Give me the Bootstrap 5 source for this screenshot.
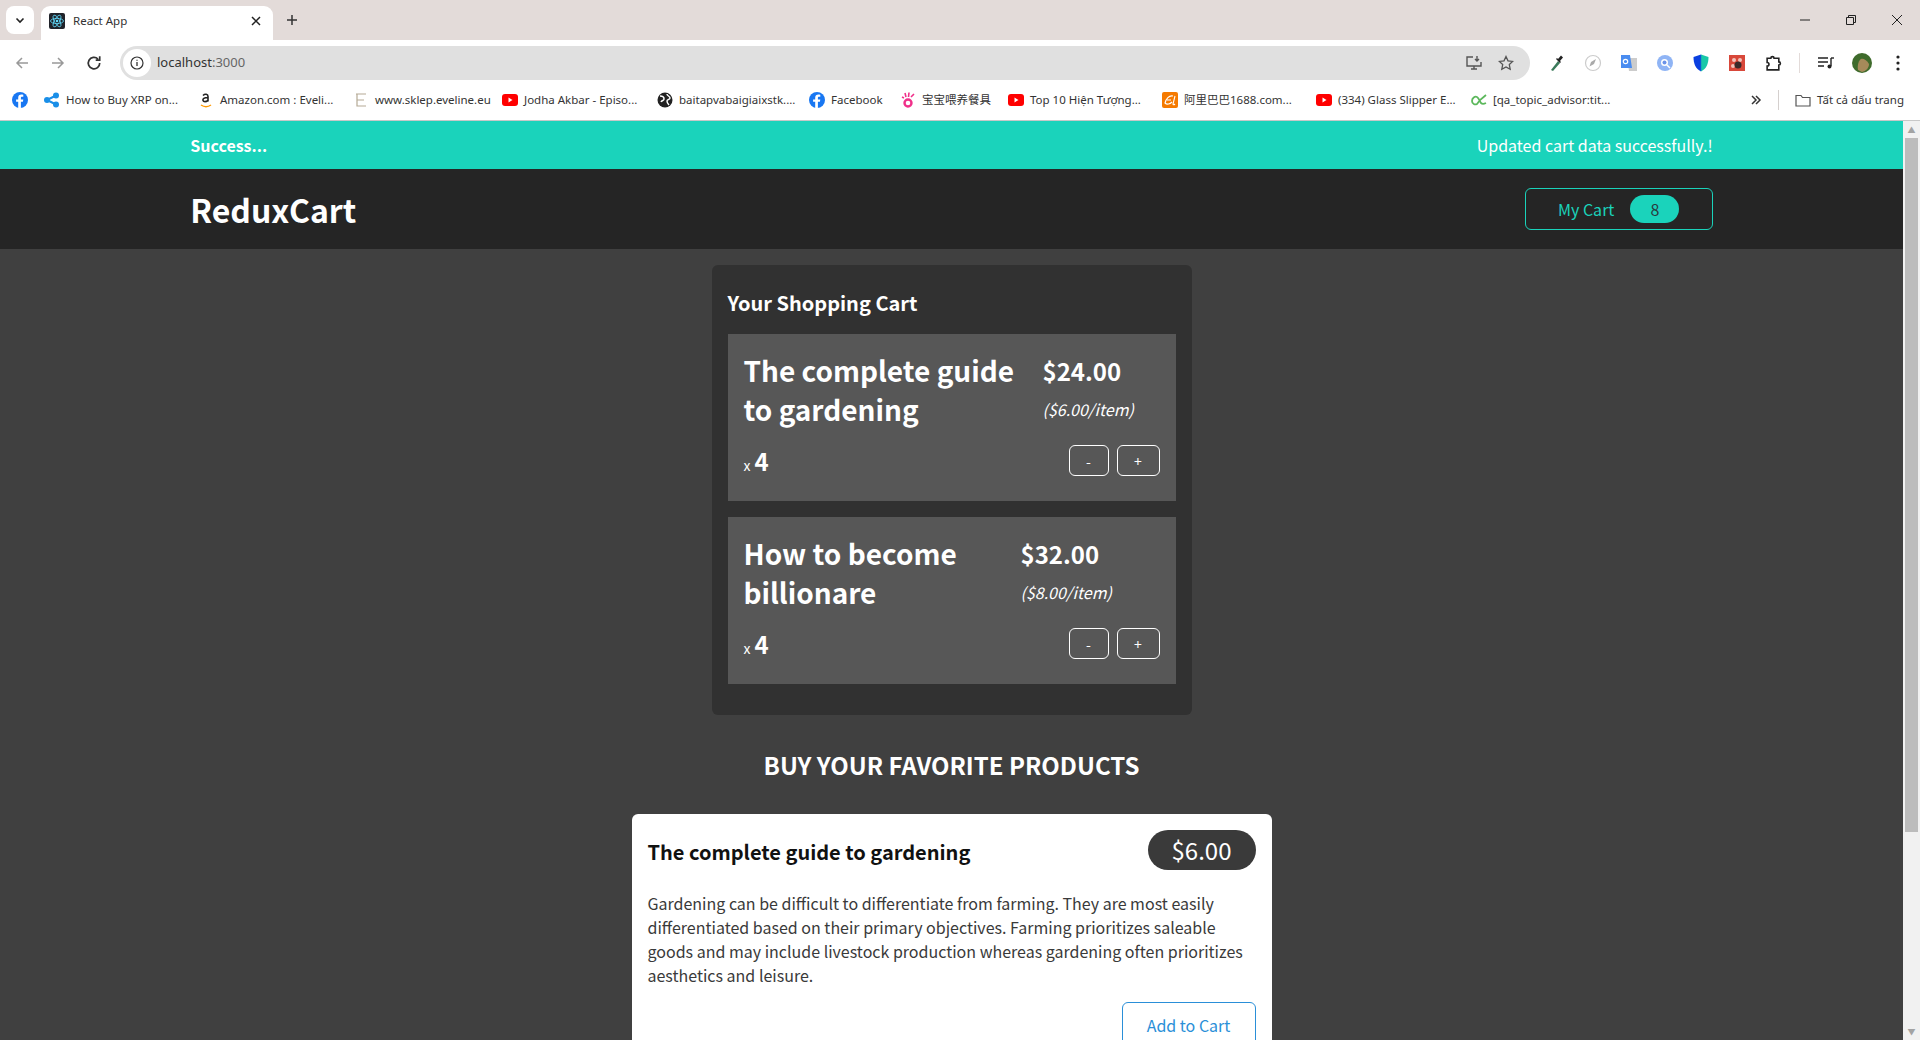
<!DOCTYPE html>
<html lang="en">
<head>
<meta charset="UTF-8">
<title>React App</title>
<link href="https://cdn.jsdelivr.net/npm/bootstrap@5.3.0/dist/css/bootstrap.min.css" rel="stylesheet">
<style>
    html, body { height: 100%; overflow: hidden; }
    body { background: #404040; font-family: "Noto Sans CJK SC", "Noto Sans", sans-serif; }
    .ui-font { font-family: "Noto Sans", "Noto Sans CJK SC", sans-serif; }

    /* browser chrome */
    .tabstrip { height: 40px; background: #e3dbd9; }
    .tab-list-btn { width: 28px; height: 28px; margin: 6px 0 0 6px; background: #fff; border-radius: 8px; }
    .tab-item { width: 232px; height: 34px; margin: 6px 0 0 7px; padding: 0 12px 5px 8px; background: #fff; border-radius: 9px 9px 0 0; font-size: 11.5px; color: #333; }
    .tab-item svg { flex: none; }
    .tab-add { width: 28px; height: 28px; margin: 6px 0 0 5px; }
    .win-btn { width: 46px; height: 40px; }
    .toolbar { height: 46px; background: #fff; padding: 6px 0 6px 4px; }
    .tool-btn { width: 36px; flex: none; }
    .tool-btn svg { display: block; margin: 0 auto; }
    .addressbar { width: 1410px; height: 34px; margin-left: 8px; margin-right: 9px; padding: 0 16px 0 3px; border-radius: 17px; background: #e0e0e0; font-size: 13px; color: #333; }
    .addr-icon { width: 28px; height: 28px; border-radius: 50%; background: #fff; margin-right: 6px; }
    .addr-dim { color: #666; }
    .tool-sep { width: 1px; height: 20px; background: #e3dbd9; margin: 0 8px; flex: none; }
    .bookmarks { height: 35px; background: #fff; border-bottom: 1px solid #c8c8c8; font-size: 11.5px; color: #333; padding: 0 0 6px 12px; display: grid; grid-template-columns: 32px 154px 155px 149px 155px 152px 91px 108px 154px 154px 155px 279px 45px 125px; align-items: center; }
    .bm-item { display: flex; align-items: center; gap: 6px; white-space: nowrap; overflow: hidden; }
    .bm-item svg { flex: none; }
    .bm-over { display: flex; align-items: center; justify-content: space-between; }
    .bm-sep { width: 1px; height: 20px; background: #d5d0ce; margin-right: 16px; }

    /* page */
    .viewport { flex: 1 1 0; min-height: 0; }
    .page-pane { flex: 1 1 0; overflow: hidden; color: #fff; }
    .fake-scroll { width: 17px; background: #f1f1f1; padding: 0 2px; flex: none; }
    .scroll-arrow { height: 17px; color: #a3a3a3; font-size: 8px; line-height: 17px; text-align: center; }
    .scroll-thumb { height: 694px; background: #bcbcbc; }
    .wrap-80 { width: 80%; margin: 0 auto; }
    .notify-bar { height: 48px; background: #1ad3bb; font-size: 16px; }
    .notify-title { font-weight: 700; }
    .top-nav { height: 80px; background: #252525; }
    .brand-name { font-size: 32px; font-weight: 700; line-height: 1; margin: 0; }
    .cart-btn { width: 188px; height: 42px; border: 1px solid #1ad3bb; border-radius: 6px; color: #1ad3bb; font-size: 16px; background: transparent; padding: 0; }
    .cart-count { width: 49px; height: 28px; margin-left: 16px; border-radius: 14px; background: #1ad3bb; color: #2a3a40; line-height: 28px; }
    .cart-panel { width: 480px; margin: 16px auto 0; padding: 15px 16px 31px 16px; background: #313131; border-radius: 6px; }
    .cart-heading { font-size: 20px; font-weight: 700; line-height: 46px; margin: 0 0 8px; }
    .cart-entry { height: 167px; margin: 0 0 16px; padding: 16px 16px 25px; background: #575757; }
    .cart-entry:last-child { margin-bottom: 0; }
    .entry-title { font-size: 28px; font-weight: 700; line-height: 39px; margin: 1px 0 0; flex: none; }
    .title-wide { width: 299px; }
    .title-narrow { width: 277px; }
    .entry-price { font-size: 24px; font-weight: 700; line-height: 39px; margin-top: 1px; }
    .entry-unit { font-size: 16px; font-style: italic; line-height: 39px; font-weight: 400; }
    .entry-qty { font-size: 14px; line-height: 1; }
    .entry-qty b { font-size: 24px; margin-left: 4px; }
    .step-btn { height: 31px; border: 1px solid #fff; border-radius: 6px; background: transparent; color: #fff; font-size: 14px; line-height: 1; padding: 0; }
    .step-minus { width: 40px; }
    .step-plus { width: 43px; }
    .section-title { font-size: 24px; font-weight: 700; text-align: center; line-height: 36px; margin: 32px 0 31px; }
    .shop-card { width: 640px; margin: 0 auto; padding: 16px; background: #fff; border-radius: 6px; color: #3a3a3a; }
    .shop-title { font-size: 20px; font-weight: 700; color: #111; line-height: 40px; margin: 2px 0 0; }
    .shop-price { width: 108px; height: 40px; border-radius: 20px; background: #3a3a3a; color: #fff; font-size: 24px; line-height: 40px; text-align: center; }
    .shop-text { font-size: 16px; line-height: 24px; margin: 19px 0 15px; }
    .shop-btn { width: 134px; height: 46px; border: 1px solid #2a8fd8; border-radius: 6px; background: #fff; color: #2a8fd8; font-size: 16px; padding: 0; }
</style>
</head>
<body class="d-flex flex-column">

<div class="tabstrip d-flex flex-none">
    <div class="tab-list-btn d-flex align-items-center justify-content-center">
        <svg width="10" height="10" viewBox="0 0 10 10"><path d="M1.500 3.500 5 7l3.500-3.500" fill="none" stroke="#222" stroke-width="1.600"/></svg>
    </div>
    <div class="tab-item ui-font d-flex align-items-center">
        <svg width="16" height="16" viewBox="0 0 16 16"><rect width="16" height="16" rx="2" fill="#20232a"/><g fill="none" stroke="#61dafb" stroke-width=".8"><ellipse cx="8" cy="8" rx="6.500" ry="2.600"/><ellipse cx="8" cy="8" rx="6.500" ry="2.600" transform="rotate(60 8 8)"/><ellipse cx="8" cy="8" rx="6.500" ry="2.600" transform="rotate(120 8 8)"/></g><circle cx="8" cy="8" r="1.300" fill="#61dafb"/></svg>
        <span class="ms-2 flex-grow-1">React App</span>
        <svg width="10" height="10" viewBox="0 0 10 10"><path d="M1 1l8 8M9 1 1 9" stroke="#222" stroke-width="1.500"/></svg>
    </div>
    <div class="tab-add d-flex align-items-center justify-content-center">
        <svg width="12" height="12" viewBox="0 0 12 12"><path d="M6 1v10M1 6h10" stroke="#333" stroke-width="1.500"/></svg>
    </div>
    <div class="ms-auto d-flex">
        <div class="win-btn d-flex align-items-center justify-content-center"><svg width="10" height="10" viewBox="0 0 10 10"><path d="M0 5h10" stroke="#222"/></svg></div>
        <div class="win-btn d-flex align-items-center justify-content-center"><svg width="10" height="10" viewBox="0 0 10 10"><path d="M.5 2.500h7v7h-7zM2.500 2.500v-2h7v7h-2" fill="none" stroke="#222"/></svg></div>
        <div class="win-btn d-flex align-items-center justify-content-center"><svg width="10" height="10" viewBox="0 0 10 10"><path d="M0 0l10 10M10 0 0 10" stroke="#222"/></svg></div>
    </div>
</div>

<div class="toolbar d-flex align-items-center ui-font">
    <div class="tool-btn"><svg width="14" height="14" viewBox="0 0 14 14"><path d="M13 7H2M7 2 2 7l5 5" fill="none" stroke="#999" stroke-width="1.500"/></svg></div>
    <div class="tool-btn"><svg width="14" height="14" viewBox="0 0 14 14"><path d="M1 7h11M7 2l5 5-5 5" fill="none" stroke="#999" stroke-width="1.500"/></svg></div>
    <div class="tool-btn"><svg width="16" height="16" viewBox="0 0 14 14"><path d="M12 7a5 5 0 1 1-1.500-3.500M12 1v3.500H8.500" fill="none" stroke="#333" stroke-width="1.500"/></svg></div>
    <div class="addressbar d-flex align-items-center">
        <div class="addr-icon d-flex align-items-center justify-content-center"><svg width="14" height="14" viewBox="0 0 14 14"><circle cx="7" cy="7" r="6" fill="none" stroke="#333" stroke-width="1.200"/><path d="M7 6v4M7 3.800v1" stroke="#333" stroke-width="1.300"/></svg></div>
        <span>localhost<span class="addr-dim">:3000</span></span>
        <div class="ms-auto d-flex align-items-center gap-3">
            <svg width="16" height="16" viewBox="0 0 16 16"><path d="M7 2H1v9h14V7M5 14h6M8 11v3M11 1v5M9 4l2 2 2-2" fill="none" stroke="#555" stroke-width="1.400"/></svg>
            <svg width="16" height="16" viewBox="0 0 16 16"><path d="m8 1.500 2 4.300 4.700.6-3.400 3.200.9 4.700L8 11.900l-4.200 2.400.9-4.700L1.300 6.400 6 5.800z" fill="none" stroke="#555" stroke-width="1.300"/></svg>
        </div>
    </div>
    <div class="tool-btn"><svg width="16" height="18" viewBox="0 0 16 18"><path d="M2 16 9 7l2 2-7 8z" fill="#3a7a5a"/><path d="M9 5l3-3.500 2 2L11 7l1 1-1 1-4-4 1-1z" fill="#222"/></svg></div>
    <div class="tool-btn"><svg width="18" height="18" viewBox="0 0 18 18"><circle cx="9" cy="9" r="7.500" fill="#fff" stroke="#ccc" stroke-width="1.200"/><path d="M5.500 12.500 7 8l5-3-2 5z" fill="#aaa"/></svg></div>
    <div class="tool-btn"><svg width="18" height="18" viewBox="0 0 18 18"><path d="M7 4h10v13H9z" fill="#ccc"/><path d="M1 1h9l2 13H1z" fill="#4a8cf0"/><circle cx="5.500" cy="7.500" r="2.200" fill="none" stroke="#fff" stroke-width="1.200"/></svg></div>
    <div class="tool-btn"><svg width="18" height="18" viewBox="0 0 18 18"><circle cx="9" cy="9" r="8" fill="#8fb4f5"/><circle cx="8.500" cy="8.500" r="3.500" fill="#fff"/><circle cx="8.500" cy="8.500" r="2" fill="#6a92e8"/><path d="m11 11 3 3" stroke="#fff" stroke-width="1.500"/></svg></div>
    <div class="tool-btn"><svg width="16" height="18" viewBox="0 0 16 18"><defs><linearGradient id="sh" x1="0" x2="1"><stop offset=".45" stop-color="#0a3fe0"/><stop offset=".55" stop-color="#18c8a8"/></linearGradient></defs><path d="M8 .5 15.500 3c0 7-2 11.500-7.500 14.500C2.500 14.500.5 10 .5 3z" fill="url(#sh)"/></svg></div>
    <div class="tool-btn"><svg width="16" height="16" viewBox="0 0 16 16"><rect width="16" height="16" fill="#d8483a"/><circle cx="5" cy="5" r="2" fill="#f3c4bc"/><circle cx="11" cy="5" r="2" fill="#f3c4bc"/><circle cx="4" cy="11" r="2" fill="#f3c4bc"/><circle cx="9" cy="10" r="3.500" fill="#3a2a2a"/></svg></div>
    <div class="tool-btn"><svg width="17" height="17" viewBox="0 0 16 16"><path d="M2 3h3.500a1.500 1.500 0 0 1 3 0H13v3.500a1.500 1.500 0 0 1 0 3V14H2v-3.500a1.500 1.500 0 0 0 0-3.500z" fill="none" stroke="#222" stroke-width="1.500"/></svg></div>
    <div class="tool-sep"></div>
    <div class="tool-btn"><svg width="16" height="14" viewBox="0 0 16 14"><path d="M0 2h10M0 6h10M0 10h6" stroke="#222" stroke-width="1.400"/><path d="M13 2v8" stroke="#222" stroke-width="1.400"/><circle cx="11.500" cy="10.500" r="2" fill="#222"/><path d="M13 2h3" stroke="#222" stroke-width="1.400"/></svg></div>
    <div class="tool-btn"><svg width="20" height="20" viewBox="0 0 20 20"><circle cx="10" cy="10" r="10" fill="#3f6b2c"/><path d="M6 17c-1-5 1-10 3-11s6 1 8 5c0 4-3 7-7 8z" fill="#a58a5a"/></svg></div>
    <div class="tool-btn"><svg width="4" height="16" viewBox="0 0 4 16"><circle cx="2" cy="2" r="1.600" fill="#222"/><circle cx="2" cy="8" r="1.600" fill="#222"/><circle cx="2" cy="14" r="1.600" fill="#222"/></svg></div>
</div>

<div class="bookmarks ui-font">
    <div class="bm-item"><svg width="16" height="16" viewBox="0 0 16 16"><circle cx="8" cy="8" r="8" fill="#1877f2"/><path d="M8.900 16V9.800h2l.4-2.400H8.900V6c0-.7.3-1.200 1.300-1.200h1.100V2.700c-.5-.1-1.200-.2-1.900-.2-2 0-3.200 1.200-3.200 3.200v1.700H4.100v2.400h2.100V16z" fill="#fff"/></svg></div>
    <div class="bm-item"><svg width="16" height="16" viewBox="0 0 16 16"><circle cx="3" cy="8" r="3" fill="#1a8fe8"/><circle cx="12" cy="3.500" r="3" fill="#1a8fe8"/><circle cx="12" cy="12.500" r="3" fill="#1a8fe8"/><path d="m3 8 9-4.500M3 8l9 4.500" stroke="#1a8fe8" stroke-width="2"/></svg><span>How to Buy XRP on...</span></div>
    <div class="bm-item"><svg width="16" height="16" viewBox="0 0 16 16"><path d="M3 13c3 2 7 2 10 0" fill="none" stroke="#f90" stroke-width="1.500"/><path d="M5 3.500c2-2 5-1.500 5 1v5M10 5.500C6 5.500 4.500 7 5 8.500s3 1.500 5 0" fill="none" stroke="#222" stroke-width="1.600"/></svg><span>Amazon.com : Eveli...</span></div>
    <div class="bm-item"><svg width="16" height="16" viewBox="0 0 16 16"><path d="M3 2h10M4 2v12h9M4 8h7" fill="none" stroke="#b5aa95" stroke-width="1.200"/></svg><span>www.sklep.eveline.eu</span></div>
    <div class="bm-item"><svg width="16" height="16" viewBox="0 0 16 16"><rect y="2" width="16" height="12" rx="3" fill="#f00"/><path d="m6.500 5.500 4 2.500-4 2.500z" fill="#fff"/></svg><span>Jodha Akbar - Episo...</span></div>
    <div class="bm-item"><svg width="16" height="16" viewBox="0 0 16 16"><circle cx="8" cy="8" r="7.500" fill="#222"/><path d="M3 4c2 0 4 1 4 3s-2 1-3 3M10 2c0 2 3 2 3 4s-3 1-3 3 1 3 2 4" fill="none" stroke="#fff" stroke-width="1.500"/></svg><span>baitapvabaigiaixstk....</span></div>
    <div class="bm-item"><svg width="16" height="16" viewBox="0 0 16 16"><circle cx="8" cy="8" r="8" fill="#1877f2"/><path d="M8.900 16V9.800h2l.4-2.400H8.900V6c0-.7.3-1.200 1.300-1.200h1.100V2.700c-.5-.1-1.200-.2-1.900-.2-2 0-3.200 1.200-3.200 3.200v1.700H4.100v2.400h2.100V16z" fill="#fff"/></svg><span>Facebook</span></div>
    <div class="bm-item"><svg width="16" height="16" viewBox="0 0 16 16"><circle cx="8" cy="11" r="3.500" fill="none" stroke="#f0308a" stroke-width="2.400"/><path d="M5 1l1 4M9 0.500 8.500 5M14 2l-3 3M2 5l2 1" stroke="#f0308a" stroke-width="1.600"/></svg><span>宝宝喂养餐具</span></div>
    <div class="bm-item"><svg width="16" height="16" viewBox="0 0 16 16"><rect y="2" width="16" height="12" rx="3" fill="#f00"/><path d="m6.500 5.500 4 2.500-4 2.500z" fill="#fff"/></svg><span>Top 10 Hiện Tượng...</span></div>
    <div class="bm-item"><svg width="16" height="16" viewBox="0 0 16 16"><rect width="16" height="16" rx="2" fill="#f57a00"/><path d="M11 4C7 3 4 7 3 11c2 2 5 1 7-1M5 8h4M13 4l-2 8c0 1 1 1 2 0" fill="none" stroke="#fff" stroke-width="1.100"/></svg><span>阿里巴巴1688.com...</span></div>
    <div class="bm-item"><svg width="16" height="16" viewBox="0 0 16 16"><rect y="2" width="16" height="12" rx="3" fill="#f00"/><path d="m6.500 5.500 4 2.500-4 2.500z" fill="#fff"/></svg><span>(334) Glass Slipper E...</span></div>
    <div class="bm-item"><svg width="16" height="16" viewBox="0 0 16 16"><path d="M15 3 9 8l-3 4c-2 1-5 0-5-3s3-5 5-4 3 5 4 6 3 1 5 0" fill="none" stroke="#5cb85c" stroke-width="1.800"/></svg><span>[qa_topic_advisor:tit...</span></div>
    <div class="bm-over"><svg width="12" height="12" viewBox="0 0 12 12"><path d="m2 2 4 4-4 4M6 2l4 4-4 4" fill="none" stroke="#333" stroke-width="1.500"/></svg><div class="bm-sep"></div></div>
    <div class="bm-item"><svg width="16" height="14" viewBox="0 0 16 14"><path d="M1 2.500h5l1.500 2H15V13H1z" fill="none" stroke="#555" stroke-width="1.200"/></svg><span>Tất cả dấu trang</span></div>
</div>

<div class="viewport d-flex">
    <div class="page-pane">
        <div class="notify-bar">
            <div class="wrap-80 h-100 d-flex align-items-center justify-content-between">
                <span class="notify-title">Success...</span>
                <span>Updated cart data successfully.!</span>
            </div>
        </div>
        <nav class="top-nav">
            <div class="wrap-80 h-100 d-flex align-items-center justify-content-between">
                <h1 class="brand-name">ReduxCart</h1>
                <button class="cart-btn d-flex align-items-center justify-content-center" type="button">
                    <span>My Cart</span><span class="cart-count">8</span>
                </button>
            </div>
        </nav>

        <section class="cart-panel">
            <h2 class="cart-heading">Your Shopping Cart</h2>
            <div class="cart-entry d-flex flex-column">
                <div class="d-flex">
                    <h3 class="entry-title title-wide">The complete guide to gardening</h3>
                    <div class="entry-price">$24.00<div class="entry-unit">($6.00/item)</div></div>
                </div>
                <div class="d-flex justify-content-between align-items-center mt-auto">
                    <div class="entry-qty">x<b>4</b></div>
                    <div class="d-flex gap-2">
                        <button class="step-btn step-minus" type="button">-</button>
                        <button class="step-btn step-plus" type="button">+</button>
                    </div>
                </div>
            </div>
            <div class="cart-entry d-flex flex-column">
                <div class="d-flex">
                    <h3 class="entry-title title-narrow">How to become billionare</h3>
                    <div class="entry-price">$32.00<div class="entry-unit">($8.00/item)</div></div>
                </div>
                <div class="d-flex justify-content-between align-items-center mt-auto">
                    <div class="entry-qty">x<b>4</b></div>
                    <div class="d-flex gap-2">
                        <button class="step-btn step-minus" type="button">-</button>
                        <button class="step-btn step-plus" type="button">+</button>
                    </div>
                </div>
            </div>
        </section>

        <h2 class="section-title">BUY YOUR FAVORITE PRODUCTS</h2>

        <div class="shop-card">
            <div class="d-flex justify-content-between align-items-start">
                <h3 class="shop-title">The complete guide to gardening</h3>
                <div class="shop-price">$6.00</div>
            </div>
            <p class="shop-text">Gardening can be difficult to differentiate from farming. They are most easily differentiated based on their primary objectives. Farming prioritizes saleable goods and may include livestock production whereas gardening often prioritizes aesthetics and leisure.</p>
            <div class="d-flex justify-content-end">
                <button class="shop-btn" type="button">Add to Cart</button>
            </div>
        </div>
    </div>
    <div class="fake-scroll d-flex flex-column">
        <div class="scroll-arrow">▲</div>
        <div class="scroll-thumb"></div>
        <div class="scroll-arrow mt-auto">▼</div>
    </div>
</div>

<script src="https://cdn.jsdelivr.net/npm/bootstrap@5.3.0/dist/js/bootstrap.bundle.min.js"></script>
</body>
</html>
